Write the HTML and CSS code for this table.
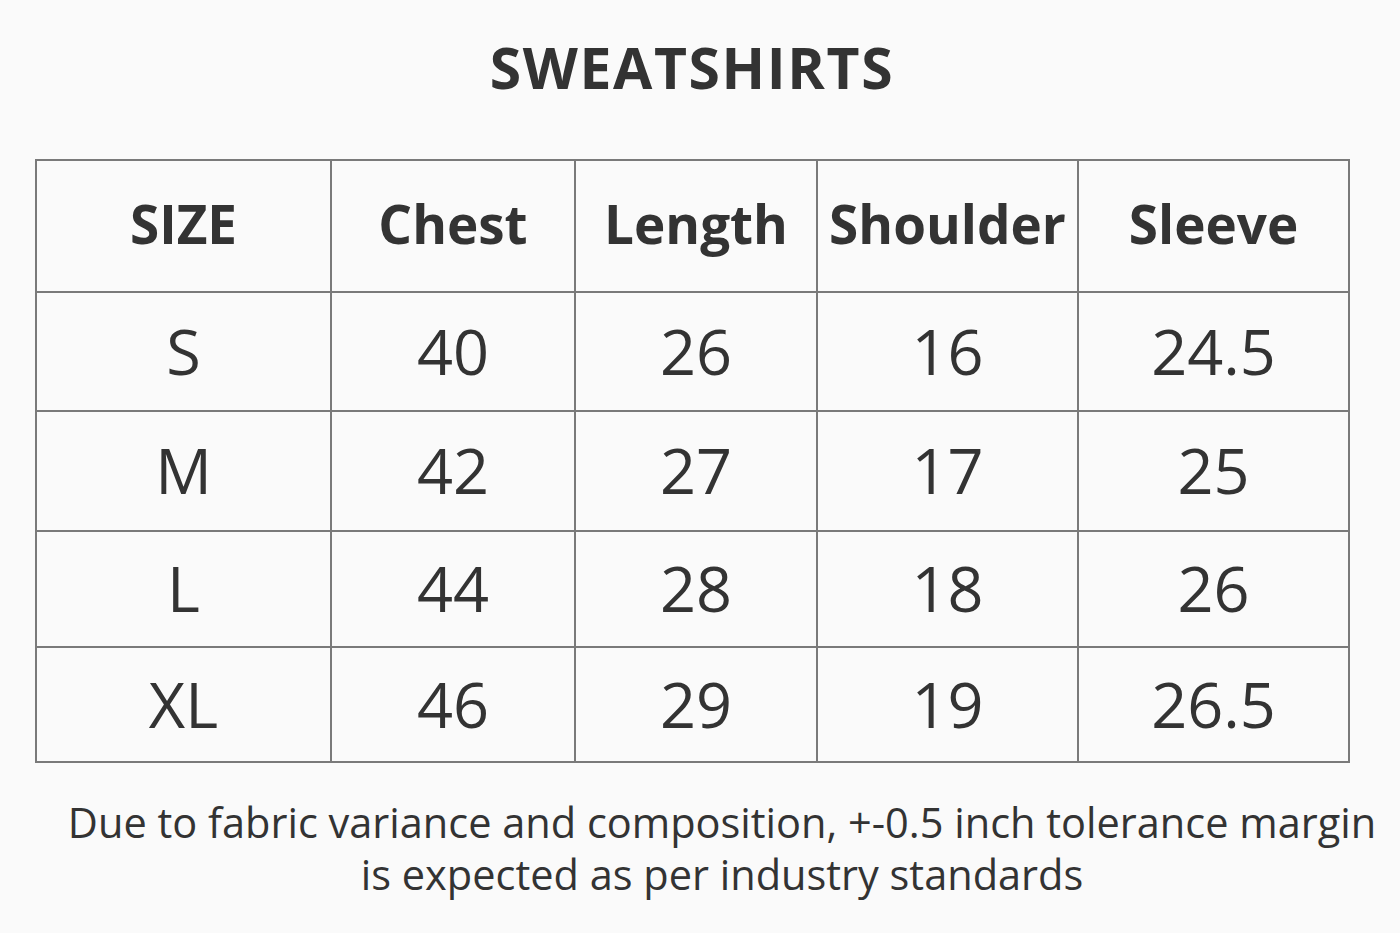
FILE: index.html
```html
<!DOCTYPE html>
<html>
<head>
<meta charset="utf-8">
<link rel="stylesheet" href="styles.css">
</head>
<body>
<div class="page">
  <h1 class="title">SWEATSHIRTS</h1>
  <table class="sizes">
    <colgroup>
      <col class="c1"><col class="c2"><col class="c3"><col class="c4"><col class="c5">
    </colgroup>
    <thead>
      <tr class="head"><th>SIZE</th><th>Chest</th><th>Length</th><th>Shoulder</th><th>Sleeve</th></tr>
    </thead>
    <tbody>
      <tr class="r1"><td>S</td><td>40</td><td>26</td><td>16</td><td>24.5</td></tr>
      <tr class="r2"><td>M</td><td>42</td><td>27</td><td>17</td><td>25</td></tr>
      <tr class="r3"><td>L</td><td>44</td><td>28</td><td>18</td><td>26</td></tr>
      <tr class="r4"><td>XL</td><td>46</td><td>29</td><td>19</td><td>26.5</td></tr>
    </tbody>
  </table>
  <p class="note">Due to fabric variance and composition, +-0.5 inch tolerance margin<br>is expected as per industry standards</p>
</div>
</body>
</html>
```
FILE: styles.css
```css
html, body {
  margin: 0;
  padding: 0;
  background: #fafafa;
}
.page {
  width: 1400px;
  height: 933px;
  font-family: "Open Sans", "Noto Sans", sans-serif;
  color: #333;
  overflow: hidden;
}
.title {
  margin: 0;
  padding-top: 34px;
  padding-right: 16px;
  height: 159px;
  box-sizing: border-box;
  text-align: center;
  font-size: 57px;
  line-height: 66px;
  font-weight: 700;
  letter-spacing: 1.6px;
}
.sizes {
  margin-left: 35px;
  border-collapse: collapse;
  table-layout: fixed;
  width: 1313px;
}
.c1 { width: 295px; }
.c2 { width: 244px; }
.c3 { width: 242px; }
.c4 { width: 261px; }
.c5 { width: 271px; }
.sizes th, .sizes td {
  border: 2px solid #7a7a7a;
  text-align: center;
  padding: 0;
  color: #333;
}
.sizes th {
  font-size: 53px;
  font-weight: 700;
  height: 124px;
  padding-bottom: 6px;
}
.sizes td {
  font-size: 63px;
  font-weight: 400;
  padding-bottom: 3px;
}
.r1 td { height: 114px; }
.r2 td { height: 115px; }
.r3 td { height: 111px; }
.r4 td { height: 110px; }
.note {
  margin: 0;
  padding-top: 33px;
  padding-left: 44px;
  text-align: center;
  font-size: 41.5px;
  line-height: 52px;
}
```
